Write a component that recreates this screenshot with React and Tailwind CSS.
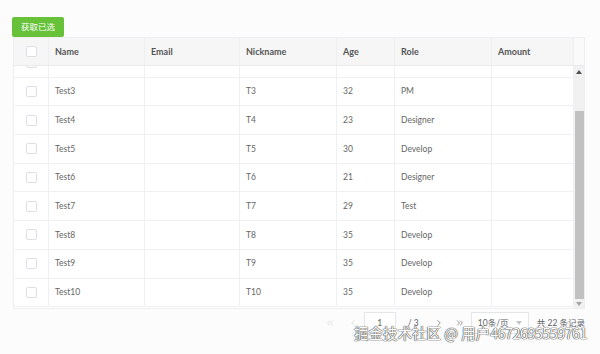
import React from "react";
import { ChevronsLeft, ChevronLeft, ChevronRight, ChevronsRight } from "lucide-react";

const cols = [
  { key: "name", label: "Name", w: "w-[96px]" },
  { key: "email", label: "Email", w: "w-[95px]" },
  { key: "nick", label: "Nickname", w: "w-[97px]" },
  { key: "age", label: "Age", w: "w-[58px]" },
  { key: "role", label: "Role", w: "w-[97px]" },
  { key: "amount", label: "Amount", w: "w-[82px]" },
];

const rows = [
  { name: "Test2", nick: "T2", age: "22", role: "Test" },
  { name: "Test3", nick: "T3", age: "32", role: "PM" },
  { name: "Test4", nick: "T4", age: "23", role: "Designer" },
  { name: "Test5", nick: "T5", age: "30", role: "Develop" },
  { name: "Test6", nick: "T6", age: "21", role: "Designer" },
  { name: "Test7", nick: "T7", age: "29", role: "Test" },
  { name: "Test8", nick: "T8", age: "35", role: "Develop" },
  { name: "Test9", nick: "T9", age: "35", role: "Develop" },
  { name: "Test10", nick: "T10", age: "35", role: "Develop" },
];

function Check() {
  return <span className="block w-[11px] h-[11px] border border-[#dcdfe6] rounded-[2px] bg-white" />;
}

function Row({ r }) {
  return (
    <div className="flex h-[28.7px] border-b border-[#eef0f3] shrink-0">
      <div className="w-[35px] flex items-center justify-center border-r border-[#eef0f3]">
        <Check />
      </div>
      {cols.map((c) => (
        <div key={c.key} className={`${c.w} flex items-center px-[6px] border-r border-[#eef0f3] text-[#666] text-[8.5px]`}>
          {r[c.key] ?? ""}
        </div>
      ))}
    </div>
  );
}

export default function App() {
  return (
    <div className="relative w-[600px] h-[354px] bg-[#fcfcfd] overflow-hidden" style={{ fontFamily: "Lato, 'Noto Sans CJK SC', sans-serif" }}>
      <div className="pl-[12px] pt-[17px]">
        <button className="h-[20px] w-[52px] bg-[#67c23a] text-white text-[8.5px] rounded-[2px] flex items-center justify-center">获取已选</button>
      </div>
      <div className="ml-[13px] w-[572px] border border-[#eceef2] bg-white flex flex-col">
        <div className="flex h-[28px] bg-[#f6f6f7] border-b border-[#e8eaee]">
          <div className="w-[35px] flex items-center justify-center border-r border-[#eceef2]">
            <Check />
          </div>
          {cols.map((c) => (
            <div key={c.key} className={`${c.w} flex items-center px-[6px] border-r border-[#eceef2] text-[#555] font-bold text-[9px]`}>
              {c.label}
            </div>
          ))}
          <div className="flex-1 bg-[#fafafa]" />
        </div>
        <div className="flex h-[242px]">
          <div className="w-[560px] h-full overflow-hidden">
            <div className="mt-[-17px] flex flex-col">
              {rows.map((r) => (
                <Row key={r.name} r={r} />
              ))}
            </div>
          </div>
          <div className="flex-1 bg-[#f1f1f1] flex flex-col items-center">
            <div className="h-[12px] flex items-center justify-center">
              <svg width="6" height="4" viewBox="0 0 6 4"><path d="M0 4 L3 0 L6 4Z" fill="#505050" /></svg>
            </div>
            <div className="h-[33px]" />
            <div className="w-[9px] h-[188px] bg-[#c1c1c1]" />
            <div className="h-[9px] flex items-center justify-center">
              <svg width="6" height="4" viewBox="0 0 6 4"><path d="M0 0 L3 4 L6 0Z" fill="#a3a3a3" /></svg>
            </div>
          </div>
        </div>
      </div>
      <div className="flex items-center justify-end pr-[15px] mt-[3px] h-[22px] text-[8.5px] text-[#606266]">
        <ChevronsLeft size={10} strokeWidth={1.5} className="text-[#c8cbd0] mr-[13px]" />
        <ChevronLeft size={10} strokeWidth={1.5} className="text-[#c8cbd0] mr-[6px]" />
        <div className="w-[32px] h-[22px] border border-[#e4e6ea] bg-white flex items-center justify-center mr-[12px]">1</div>
        <span className="mr-[15px]">/ 3</span>
        <ChevronRight size={10} strokeWidth={1.5} className="text-[#555] mr-[11px]" />
        <ChevronsRight size={10} strokeWidth={1.5} className="text-[#555] mr-[6px]" />
        <div className="w-[58px] h-[22px] border border-[#e4e6ea] bg-white flex items-center justify-between px-[6px] mr-[8px]">
          <span>10条/页</span>
          <svg width="6" height="4" viewBox="0 0 6 4"><path d="M0 0 L3 4 L6 0Z" fill="#c0c4cc" /></svg>
        </div>
        <span>共 22 条记录</span>
      </div>
      <div className="absolute right-[13px] top-[324px] text-white text-[14.5px] leading-[18px] whitespace-nowrap [text-shadow:0_0_1px_#444,0_0_1px_#444,0_0_1px_#444]" style={{ fontFamily: "'Noto Sans CJK SC', sans-serif" }}>
        掘金技术社区 @ 用户<span className="tracking-[-0.6px]">4672695559761</span>
      </div>
    </div>
  );
}
